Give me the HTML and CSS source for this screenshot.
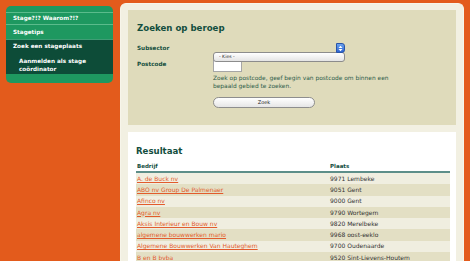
FILE: index.html
```html
<!DOCTYPE html>
<html lang="nl">
  <head>
    <meta charset="UTF-8" />
    <title>Zoek een stageplaats</title>
    <link rel="stylesheet" href="styles.css">
  </head>
  <body>
    <nav class="side-nav">
      <ul class="side-nav-list">
        <li class="side-nav-item"><a href="#">Stage?!? Waarom?!?</a></li>
        <li class="side-nav-item"><a href="#">Stagetips</a></li>
        <li class="side-nav-item is-active">
          <a href="#">Zoek een stageplaats</a>
          <ul class="side-nav-sub">
            <li><a href="#">Aanmelden als stage coördinator</a></li>
          </ul>
        </li>
      </ul>
    </nav>

    <main class="content">
      <section class="search-box">
        <h2 class="box-title">Zoeken op beroep</h2>
        <form class="search-form">
          <div class="form-row">
            <label class="form-label" for="subsector">Subsector</label>
            <div class="select-wrap">
              <select id="subsector" class="form-select">
                <option>- Kies -</option>
              </select>
              <span class="select-arrows">
                <svg width="5" height="7" viewBox="0 0 5 7">
                  <path d="M0.5 3 L2.5 0.8 L4.5 3 Z M0.5 4 L2.5 6.2 L4.5 4 Z" fill="#fff"/>
                </svg>
              </span>
            </div>
          </div>
          <div class="form-row">
            <label class="form-label" for="postcode">Postcode</label>
            <div class="form-field">
              <input id="postcode" class="form-input" type="text" />
              <p class="form-help">Zoek op postcode, geef begin van postcode om binnen een bepaald gebied te zoeken.</p>
            </div>
          </div>
          <div class="form-row">
            <span class="form-label"></span>
            <button type="button" class="form-button">Zoek</button>
          </div>
        </form>
      </section>

      <section class="results-box">
        <h2 class="box-title">Resultaat</h2>
        <table class="results-table">
          <thead>
            <tr><th class="col-company">Bedrijf</th><th>Plaats</th></tr>
          </thead>
          <tbody>
            <tr><td><a href="#">A. de Buck nv</a></td><td>9971 Lembeke</td></tr>
            <tr><td><a href="#">ABO nv Group De Palmenaer</a></td><td>9051 Gent</td></tr>
            <tr><td><a href="#">Afinco nv</a></td><td>9000 Gent</td></tr>
            <tr><td><a href="#">Agra nv</a></td><td>9790 Wortegem</td></tr>
            <tr><td><a href="#">Aksis Interieur en Bouw nv</a></td><td>9820 Merelbeke</td></tr>
            <tr><td><a href="#">algemene bouwwerken mario</a></td><td>9968 oost-eeklo</td></tr>
            <tr><td><a href="#">Algemene Bouwwerken Van Hauteghem</a></td><td>9700 Oudenaarde</td></tr>
            <tr><td><a href="#">B en B bvba</a></td><td>9520 Sint-Lievens-Houtem</td></tr>
          </tbody>
        </table>
      </section>
    </main>
  </body>
</html>
```

FILE: styles.css
```css
html, body {
  height: 100%;
}
body {
  margin: 0;
  display: flex;
  align-items: flex-start;
  padding: 3px 6px 0 6px;
  box-sizing: border-box;
  background-color: #e35b1c;
  font-family: "DejaVu Sans", Verdana, sans-serif;
  overflow: hidden;
}

/* linker menu */
.side-nav {
  width: 107px;
  margin-top: 3px;
  padding: 6px 0 9px;
  background-color: #1e9860;
  border-radius: 5px;
}
.side-nav-list,
.side-nav-sub {
  list-style: none;
  margin: 0;
  padding: 0;
}
.side-nav-item {
  border-top: 1px solid #5bbb8c;
}
.side-nav-item > a {
  display: block;
  padding: 2px 7px;
  color: #fff;
  font-size: 5.7px;
  font-weight: bold;
  line-height: 7px;
  text-decoration: none;
}
.side-nav-item + .side-nav-item > a {
  padding: 4px 7px 3px;
}
.side-nav-item.is-active {
  background-color: #0d4c38;
  border-top-color: #3f9d75;
}
.side-nav-item.is-active > a {
  padding: 3px 7px 3px;
}
.side-nav-sub a {
  display: block;
  padding: 4px 10px 1px 13px;
  color: #fff;
  font-size: 5.7px;
  font-weight: bold;
  line-height: 8px;
  text-decoration: none;
}

/* inhoud */
.content {
  display: flex;
  flex-direction: column;
  width: 344px;
  height: 100%;
  margin-left: 7px;
  padding: 6px 7px 0 7px;
  box-sizing: border-box;
  background-color: #f2f0e2;
  border: 1px solid #f7f5ea;
  border-bottom: none;
  border-radius: 6px 6px 0 0;
  overflow: hidden;
}
.search-box {
  flex-shrink: 0;
  height: 115px;
  padding: 11px 9px 0;
  box-sizing: border-box;
  background-color: #dfdbbb;
}
.box-title {
  margin: 0;
  color: #134e3e;
  font-size: 8.6px;
  font-weight: bold;
  line-height: 14px;
}
.search-form {
  margin-top: 8px;
}
.form-row {
  display: flex;
  align-items: flex-start;
  margin-bottom: 6px;
}
.form-label {
  width: 76px;
  flex-shrink: 0;
  color: #134e3e;
  font-size: 5.7px;
  font-weight: bold;
  line-height: 10px;
}

.select-wrap {
  position: relative;
  width: 132px;
  height: 10px;
}
.form-select {
  -webkit-appearance: none;
  appearance: none;
  width: 100%;
  height: 10px;
  margin: 0;
  padding: 0 0 0 5px;
  border: 1px solid #8c8c8c;
  border-radius: 3px;
  background: linear-gradient(#ffffff, #e4e4e4);
  color: #333;
  font-family: "DejaVu Sans", Verdana, sans-serif;
  font-size: 4.6px;
  line-height: 8px;
}
.select-arrows {
  position: absolute;
  top: 0;
  right: 0;
  width: 9px;
  height: 10px;
  display: flex;
  align-items: center;
  justify-content: center;
  border-radius: 0 3px 3px 0;
  background: linear-gradient(#6aa3ef, #2d64d2);
  border: 1px solid #2a55a8;
  box-sizing: border-box;
}

.form-field {
  display: flex;
  flex-direction: column;
}
.form-input {
  width: 29px;
  height: 12px;
  margin: 1px 0 0;
  padding: 0;
  border: 1px solid #a6a6a6;
  box-sizing: border-box;
  background-color: #fff;
}
.form-help {
  width: 195px;
  margin: 2px 0 0;
  color: #2d5b4a;
  font-size: 5.9px;
  line-height: 8.3px;
}
.form-row:last-child {
  margin-top: 3px;
}
.form-button {
  width: 102px;
  height: 11px;
  margin: 0;
  padding: 0;
  border: 1px solid #8e8e8e;
  border-radius: 6px;
  background: linear-gradient(#ffffff, #e6e6e6);
  color: #222;
  font-family: "DejaVu Sans", Verdana, sans-serif;
  font-size: 5px;
  line-height: 9px;
}

/* resultaten */
.results-box {
  flex-grow: 1;
  margin-top: 7px;
  padding: 12px 7px 0 8px;
  box-sizing: border-box;
  background-color: #fff;
  overflow: hidden;
}
.results-table {
  width: 314px;
  margin-top: 2px;
  border-collapse: collapse;
  font-size: 6px;
}
.results-table th {
  padding: 3px 1px 1px;
  border-bottom: 2px solid #5d8e89;
  color: #134e3e;
  font-size: 5.5px;
  font-weight: bold;
  line-height: 7px;
  text-align: left;
}
.results-table .col-company {
  width: 191px;
}
.results-table td {
  height: 11.3px;
  padding: 0 1px;
  color: #333;
  line-height: 8px;
}
.results-table tbody tr:nth-child(odd) {
  background-color: #f0eee0;
}
.results-table tbody tr:nth-child(even) {
  background-color: #e3dfc4;
}
.results-table a {
  color: #e25b2c;
}
```
